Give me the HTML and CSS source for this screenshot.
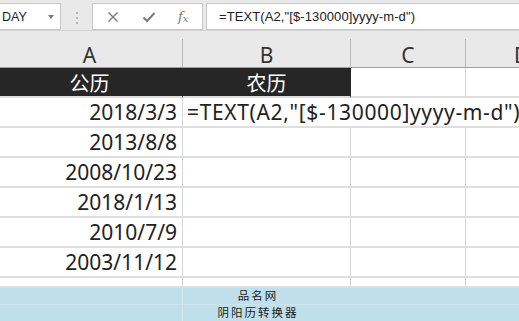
FILE: index.html
```html
<!DOCTYPE html>
<html>
<head>
<meta charset="utf-8">
<link rel="stylesheet" href="styles.css">
</head>
<body>
<div class="app">
  <div class="toolbar">
    <div class="namebox"><span class="nametext">DAY</span><span class="caret"></span></div>
    <div class="grip"><i></i><i></i><i></i></div>
    <div class="fbtns">
      <svg class="ico" width="12" height="12" viewBox="0 0 12 12"><path d="M1.5 1.5 L10.5 10.5 M10.5 1.5 L1.5 10.5" stroke="#7a7a7a" stroke-width="1.4" fill="none"/></svg>
      <svg class="ico" width="14" height="12" viewBox="0 0 14 12"><path d="M1.5 6.5 L5 10 L12.5 2" stroke="#7a7a7a" stroke-width="2" fill="none"/></svg>
      <span class="fx">f<span class="fxx">x</span></span>
    </div>
    <div class="formula">=TEXT(A2,"[$-130000]yyyy-m-d")</div>
  </div>
  <div class="sheet">
    <div class="colheads">
      <div class="ch">A</div>
      <div class="ch">B</div>
      <div class="ch">C</div>
      <div class="ch chd">D</div>
    </div>
    <div class="grid">
      <div class="c dark">公历</div>
      <div class="c dark">农历</div>
      <div class="c"></div>
      <div class="c"></div>

      <div class="c num">2018/3/3</div>
      <div class="c over">=TEXT(A2,"[$-130000]yyyy-m-d")</div>

      <div class="c num">2013/8/8</div><div class="c"></div><div class="c"></div><div class="c"></div>
      <div class="c num">2008/10/23</div><div class="c"></div><div class="c"></div><div class="c"></div>
      <div class="c num">2018/1/13</div><div class="c"></div><div class="c"></div><div class="c"></div>
      <div class="c num">2010/7/9</div><div class="c"></div><div class="c"></div><div class="c"></div>
      <div class="c num">2003/11/12</div><div class="c"></div><div class="c"></div><div class="c"></div>

      <div class="c short"></div><div class="c short"></div><div class="c short"></div><div class="c short"></div>

      <div class="c blue"></div>
      <div class="c blue note">品名网</div>
      <div class="c blue rest"></div>
      <div class="c blue"></div>
      <div class="c blue note">阴阳历转换器</div>
      <div class="c blue rest"></div>
    </div>
  </div>
</div>
</body>
</html>
```

FILE: styles.css
```css
html, body {
  margin: 0;
  padding: 0;
  width: 519px;
  height: 321px;
  overflow: hidden;
  background: #ffffff;
}

.app {
  display: flex;
  flex-direction: column;
  width: 519px;
  height: 321px;
  overflow: hidden;
  font-family: "Noto Sans", "Noto Sans CJK SC", sans-serif;
}

.toolbar {
  display: flex;
  align-items: flex-start;
  padding-top: 3px;
  box-sizing: border-box;
  background: #e9e9e9;
  border-bottom: 1px solid #d3d3d3;
  flex: 0 0 auto;
  height: 31px;
}

.namebox {
  display: flex;
  align-items: center;
  justify-content: space-between;
  margin-left: -1px;
  width: 62px;
  height: 27px;
  box-sizing: border-box;
  border: 1px solid #c8c8c8;
  background: #fff;
  padding: 0 6px 0 2px;
}

.nametext {
  font-family: "Liberation Sans", sans-serif;
  font-size: 12.5px;
  color: #222;
}

.caret {
  width: 0;
  height: 0;
  border-left: 3.5px solid transparent;
  border-right: 3.5px solid transparent;
  border-top: 4px solid #7a7a7a;
}

.grip {
  display: flex;
  flex-direction: column;
  gap: 3px;
  margin: 9px 0 0 15px;
  width: 2px;
}
.grip i {
  display: block;
  width: 2px;
  height: 2px;
  background: #b5b5b5;
}

.fbtns {
  display: flex;
  align-items: center;
  margin-left: 14px;
  width: 111px;
  height: 27px;
  box-sizing: border-box;
  border: 1px solid #c8c8c8;
  background: #fff;
  padding-left: 14px;
}
.fbtns .ico:nth-child(1) { margin-right: 23px; }
.fbtns .ico:nth-child(2) { margin-right: 22px; }

.fx {
  font-family: "DejaVu Serif", "Liberation Serif", serif;
  font-style: italic;
  font-size: 13px;
  color: #7a7a7a;
  line-height: 1;
}
.fxx {
  font-size: 10px;
  position: relative;
  top: 1px;
}

.formula {
  margin-left: 3px;
  flex: 1 0 auto;
  height: 27px;
  box-sizing: border-box;
  border: 1px solid #c8c8c8;
  border-right: none;
  background: #fff;
  padding-left: 12px;
  display: flex;
  align-items: center;
  font-family: "Liberation Sans", sans-serif;
  font-size: 13px;
  letter-spacing: 0.1px;
  color: #222;
  white-space: nowrap;
}

.sheet {
  flex: 1 1 auto;
  margin-left: -3px;
  width: 640px;
}

.colheads {
  display: grid;
  grid-template-columns: 186px 168px 115px 120px;
  height: 37px;
  box-sizing: border-box;
  background: #e9e9e9;
  border-bottom: 1px solid #9f9f9f;
  align-items: end;
}

.ch {
  height: 28px;
  box-sizing: border-box;
  border-right: 1px solid #b9b9b9;
  display: flex;
  align-items: center;
  justify-content: center;
  padding-top: 4px;
  font-family: "Noto Sans", sans-serif;
  font-size: 21px;
  color: #333;
  line-height: 1;
}
.chd {
  justify-content: flex-start;
  padding-left: 48px;
}

.grid {
  display: grid;
  grid-template-columns: 186px 168px 115px 120px;
  grid-template-rows: 30px repeat(6, 30px) 10px 17px 17px;
}

.c {
  box-sizing: border-box;
  border-right: 1px solid #d6d6d6;
  border-bottom: 2px solid #dedede;
  display: flex;
  align-items: center;
  font-size: 21px;
  color: #222;
  white-space: nowrap;
  line-height: 1;
}

.dark {
  background: #262626;
  color: #ffffff;
  justify-content: center;
  border-right-color: #262626;
  font-family: "Noto Sans CJK SC", sans-serif;
  font-size: 20px;
  padding-top: 1px;
}

.num {
  justify-content: flex-end;
  padding-right: 5px;
}

.over {
  grid-column: 2 / 5;
  padding-left: 4px;
  overflow: hidden;
  border-right: none;
  letter-spacing: 0.65px;
}

.blue {
  background: #bfe0ea;
  border-right-color: #d2e7ed;
  border-bottom: 1px solid #cde6ee;
}
.note {
  border-right: none;
  justify-content: center;
  padding-right: 18px;
  font-family: "Noto Sans CJK SC", sans-serif;
  font-size: 11.5px;
  letter-spacing: 2px;
  color: #1a1a1a;
}
.rest {
  grid-column: 3 / 5;
  border-right: none;
}
```
